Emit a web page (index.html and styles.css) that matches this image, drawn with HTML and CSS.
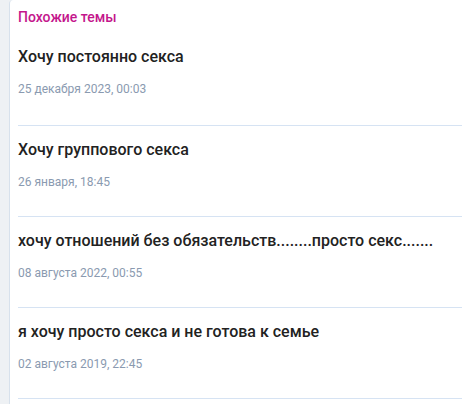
FILE: index.html
```html
<!DOCTYPE html>
<html lang="ru">
<head>
<meta charset="utf-8">
<link rel="stylesheet" href="styles.css">
</head>
<body>
<div class="page">
  <div class="card">
    <div class="card-title">Похожие темы</div>
    <ul class="list">
      <li class="item">
        <a class="item-title">Хочу постоянно секса</a>
        <div class="item-date">25 декабря 2023, 00:03</div>
      </li>
      <li class="item">
        <a class="item-title">Хочу группового секса</a>
        <div class="item-date">26 января, 18:45</div>
      </li>
      <li class="item">
        <a class="item-title">хочу отношений без обязательств........просто секс.......</a>
        <div class="item-date">08 августа 2022, 00:55</div>
      </li>
      <li class="item">
        <a class="item-title">я хочу просто секса и не готова к семье</a>
        <div class="item-date">02 августа 2019, 22:45</div>
      </li>
    </ul>
  </div>
</div>
</body>
</html>
```

FILE: styles.css
```css
* { box-sizing: border-box; }
html, body { margin: 0; padding: 0; }
body {
  background: #eef1f4;
  font-family: Roboto, "Noto Sans", sans-serif;
  height: 404px;
  overflow: hidden;
}
.page {
  padding-left: 9px;
}
.card {
  background: #fff;
  border-left: 1px solid #d7e1ec;
  border-top-left-radius: 4px;
  min-height: 404px;
  padding-left: 8px;
}
.card-title {
  color: #c4168c;
  font-size: 14px;
  font-weight: 500;
  line-height: 16px;
  padding-top: 9px;
}
.list {
  list-style: none;
  margin: 0;
  padding: 0;
}
.item {
  border-bottom: 1px solid #d6e3f3;
  padding-top: 14px;
  height: 91px;
}
.item:first-child {
  padding-top: 22px;
  height: 101px;
}
.item-title {
  display: block;
  color: #222;
  font-size: 16px;
  font-weight: 500;
  line-height: 20px;
}
.item-date {
  color: #8a9ab0;
  font-size: 12px;
  line-height: 16px;
  margin-top: 14px;
}
```
